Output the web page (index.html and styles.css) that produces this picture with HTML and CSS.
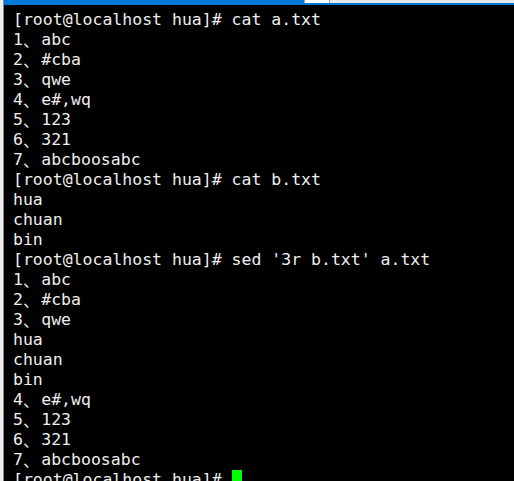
FILE: index.html
```html
<!DOCTYPE html>
<html>
<head>
<meta charset="utf-8">
<link rel="stylesheet" href="styles.css">
</head>
<body>
<div class="window">
  <div class="side"></div>
  <div class="main">
    <div class="tabs">
      <div class="tab-active"></div>
      <div class="tab-new"></div>
      <div class="tab-rest"></div>
    </div>
    <div class="accent"></div>
    <div class="term">
      <div class="line">[root@localhost hua]# cat a.txt</div>
      <div class="line">1<span class="w">、</span>abc</div>
      <div class="line">2<span class="w">、</span>#cba</div>
      <div class="line">3<span class="w">、</span>qwe</div>
      <div class="line">4<span class="w">、</span>e#,wq</div>
      <div class="line">5<span class="w">、</span>123</div>
      <div class="line">6<span class="w">、</span>321</div>
      <div class="line">7<span class="w">、</span>abcboosabc</div>
      <div class="line">[root@localhost hua]# cat b.txt</div>
      <div class="line">hua</div>
      <div class="line">chuan</div>
      <div class="line">bin</div>
      <div class="line">[root@localhost hua]# sed '3r b.txt' a.txt</div>
      <div class="line">1<span class="w">、</span>abc</div>
      <div class="line">2<span class="w">、</span>#cba</div>
      <div class="line">3<span class="w">、</span>qwe</div>
      <div class="line">hua</div>
      <div class="line">chuan</div>
      <div class="line">bin</div>
      <div class="line">4<span class="w">、</span>e#,wq</div>
      <div class="line">5<span class="w">、</span>123</div>
      <div class="line">6<span class="w">、</span>321</div>
      <div class="line">7<span class="w">、</span>abcboosabc</div>
      <div class="line">[root@localhost hua]# <span class="cursor"></span></div>
    </div>
  </div>
</div>
</body>
</html>
```
FILE: styles.css
```css
html, body {
  margin: 0;
  padding: 0;
  background: #000;
  overflow: hidden;
}
.window {
  display: flex;
  width: 514px;
  height: 481px;
  overflow: hidden;
}
.side {
  width: 3px;
  flex: none;
  background: #f0f0f0;
  border-right: 1px solid #8a8a8a;
}
.main {
  flex: 1;
  display: flex;
  flex-direction: column;
  min-width: 0;
}
.tabs {
  height: 3px;
  display: flex;
  flex: none;
}
.tab-active {
  width: 300px;
  background: #0078d7;
}
.tab-new {
  width: 24px;
  background: #fff;
  border-left: 1px solid #a0a0a0;
  border-right: 1px solid #a0a0a0;
}
.tab-rest {
  flex: 1;
  background: #e8e8e8;
}
.accent {
  height: 2px;
  flex: none;
  background: #0078d7;
}
.term {
  padding: 5px 0 0 9px;
  font-family: "DejaVu Sans Mono", monospace;
  font-size: 16.5px;
  line-height: 20px;
  color: #eeeeee;
}
.line {
  height: 20px;
  white-space: pre;
}
.w {
  display: inline-block;
  width: 2ch;
  height: 20px;
  line-height: 20px;
  vertical-align: top;
  font-family: "Noto Sans CJK SC", sans-serif;
}
.cursor {
  display: inline-block;
  width: 10px;
  height: 20px;
  background: #00ff00;
  vertical-align: top;
}
```
